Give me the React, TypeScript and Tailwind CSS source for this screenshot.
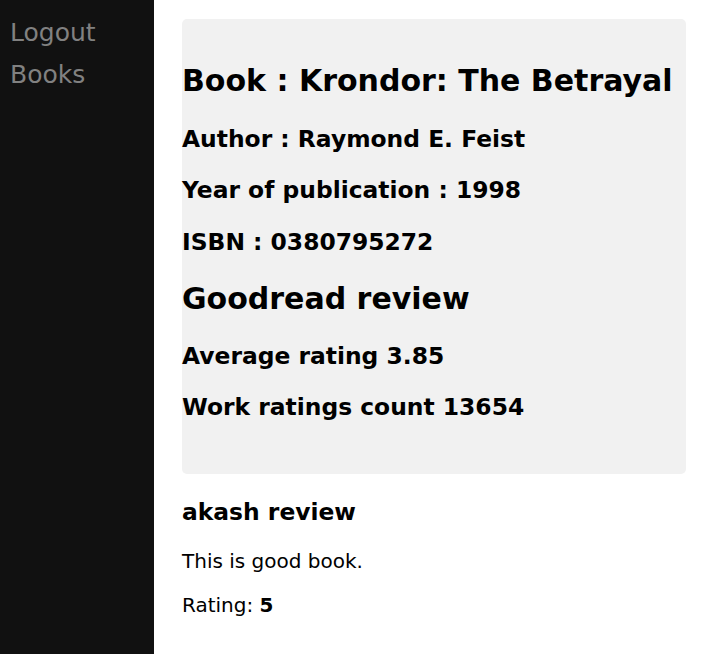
const font = { fontFamily: '"DejaVu Sans", sans-serif' }

const BookDetail = () => {
  return (
    <div className="flex min-h-screen bg-white text-black" style={font}>
      {/* Sidebar */}
      <nav className="w-[154px] shrink-0 bg-[#111111] pt-[12px]">
        <a className="block py-[6px] pl-[10px] text-[25px] leading-[29px] text-[#818181]" href="#">
          Logout
        </a>
        <a className="mt-[1px] block py-[6px] pl-[10px] text-[25px] leading-[29px] text-[#818181]" href="#">
          Books
        </a>
      </nav>

      {/* Main */}
      <main className="flex-1 pt-[19px] pl-[28px] pr-[21px]">
        <div className="rounded-[5px] bg-[#f1f1f1] pt-[44px] pb-[53px]">
          <h2 className="text-[30px] leading-[35px] font-bold">Book : Krondor: The Betrayal</h2>
          <h3 className="mt-[27px] text-[23.4px] leading-[28px] font-bold">Author : Raymond E. Feist</h3>
          <h3 className="mt-[23px] text-[23.4px] leading-[28px] font-bold">Year of publication : 1998</h3>
          <h3 className="mt-[24px] text-[23.4px] leading-[28px] font-bold">ISBN : 0380795272</h3>
          <h2 className="mt-[25px] text-[30px] leading-[35px] font-bold">Goodread review</h2>
          <h3 className="mt-[26px] text-[23.4px] leading-[28px] font-bold">Average rating 3.85</h3>
          <h3 className="mt-[23px] text-[23.4px] leading-[28px] font-bold">Work ratings count 13654</h3>
        </div>

        <div className="pt-[24px]">
          <h3 className="text-[23.4px] leading-[28px] font-bold">akash review</h3>
          <p className="mt-[24px] text-[20px] leading-[23px]">This is good book.</p>
          <p className="mt-[21px] text-[20px] leading-[23px]">
            Rating: <b>5</b>
          </p>
        </div>
      </main>
    </div>
  )
}

export default function App() {
  return <BookDetail />
}
